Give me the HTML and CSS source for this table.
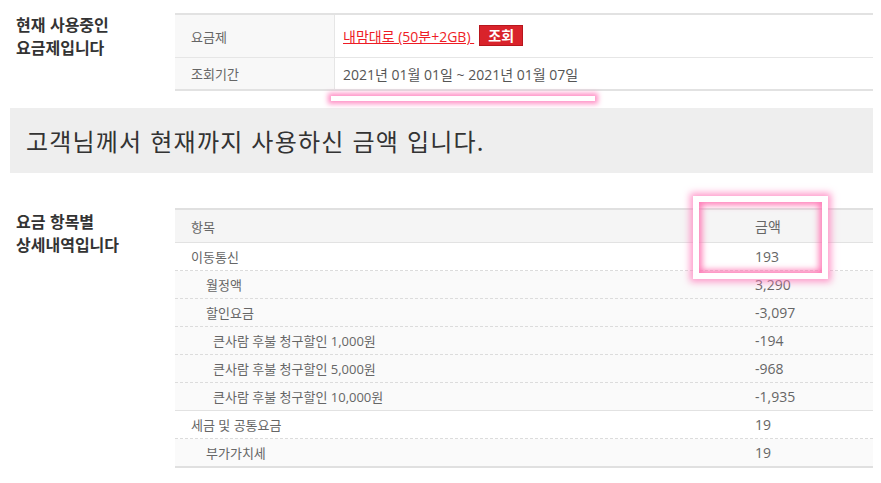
FILE: index.html
```html
<!DOCTYPE html>
<html lang="ko">
<head>
<meta charset="utf-8">
<title>요금 조회</title>
<link rel="stylesheet" href="styles.css">
</head>
<body>
<div class="page">
  <section class="sec sec-plan">
    <h2 class="sec-title">현재 사용중인<br>요금제입니다</h2>
    <div class="info">
      <div class="info-row info-row-first">
        <div class="info-label">요금제</div>
        <div class="info-value"><a class="plan-link" href="#">내맘대로 (50분+2GB) </a><button class="btn-red" type="button">조회</button></div>
      </div>
      <div class="info-row info-row-second">
        <div class="info-label">조회기간</div>
        <div class="info-value">2021년 01월 01일 ~ 2021년 01월 07일</div>
      </div>
    </div>
  </section>

  <div class="banner">고객님께서 현재까지 사용하신 금액 입니다.</div>

  <section class="sec sec-detail">
    <h2 class="sec-title sec-title-detail">요금 항목별<br>상세내역입니다</h2>
    <div class="bill">
      <div class="bill-head">
        <div class="c-name">항목</div>
        <div class="c-amt">금액</div>
      </div>
      <div class="bill-row lv0"><div class="c-name">이동통신</div><div class="c-amt">193</div></div>
      <div class="bill-row lv1 alt"><div class="c-name">월정액</div><div class="c-amt">3,290</div></div>
      <div class="bill-row lv1 alt"><div class="c-name">할인요금</div><div class="c-amt">-3,097</div></div>
      <div class="bill-row lv2 alt"><div class="c-name">큰사람 후불 청구할인 1,000원</div><div class="c-amt">-194</div></div>
      <div class="bill-row lv2 alt"><div class="c-name">큰사람 후불 청구할인 5,000원</div><div class="c-amt">-968</div></div>
      <div class="bill-row lv2 alt group-end"><div class="c-name">큰사람 후불 청구할인 10,000원</div><div class="c-amt">-1,935</div></div>
      <div class="bill-row lv0"><div class="c-name">세금 및 공통요금</div><div class="c-amt">19</div></div>
      <div class="bill-row lv1 alt last"><div class="c-name">부가가치세</div><div class="c-amt">19</div></div>
    </div>
  </section>
</div>
<div class="mark mark-bar"></div>
<div class="mark mark-box"></div>
</body>
</html>
```
FILE: styles.css
```css
* { box-sizing: border-box; }
html, body { margin: 0; padding: 0; background: #fff; }
body {
  position: relative;
  width: 881px;
  height: 483px;
  overflow: hidden;
  font-family: "Open Sans", "Noto Sans CJK KR", sans-serif;
  font-size: 13px;
  color: #666;
}
.page { margin: 0 8px 0 10px; width: 863px; }

.sec { display: flex; align-items: flex-start; padding-left: 6px; }
.sec-plan { padding-top: 13px; }
.sec-detail { padding-top: 35px; }

.sec-title {
  width: 159px;
  flex: none;
  margin: 0;
  font-family: "Noto Sans CJK KR", sans-serif;
  font-size: 16px;
  font-weight: 700;
  line-height: 23px;
  color: #333;
}
.sec-title-detail { margin-top: 2px; }

/* top info table */
.info {
  width: 698px;
  border-top: 2px solid #e2e2e2;
  border-bottom: 2px solid #e2e2e2;
}
.info-row { display: flex; align-items: stretch; }
.info-row-first { height: 43px; border-bottom: 1px solid #e6e6e6; }
.info-row-second { height: 31px; }
.info-label {
  width: 160px;
  flex: none;
  background: #f8f8f8;
  border-right: 1px solid #e6e6e6;
  padding-left: 16px;
  display: flex;
  align-items: center;
  color: #666;
}
.info-value {
  flex: 1;
  padding-left: 8px;
  display: flex;
  align-items: center;
  color: #555;
  font-size: 14px;
}
.plan-link {
  color: #ee1c25;
  text-decoration: underline;
  white-space: pre;
  margin-right: 5px;
}
.btn-red {
  height: 21px;
  width: 44px;
  padding: 0;
  border: 1px solid #b8161d;
  background: #d9232b;
  color: #fff;
  font-family: "Noto Sans CJK KR", sans-serif;
  font-size: 14px;
  font-weight: 700;
  line-height: 19px;
  margin-top: -1px;
}

/* banner */
.banner {
  margin-top: 17px;
  height: 65px;
  background: #eeeeee;
  padding-left: 16px;
  display: flex;
  align-items: center;
  font-family: "Noto Sans CJK KR", sans-serif;
  font-size: 24px;
  color: #333;
  letter-spacing: 1.2px;
}

/* bill table */
.bill {
  width: 698px;
  border-top: 2px solid #e0e0e0;
  border-bottom: 2px solid #e0e0e0;
}
.bill-head, .bill-row { display: flex; align-items: center; }
.bill-head {
  height: 33px;
  background: #f5f5f5;
  border-bottom: 1px solid #e2e2e2;
}
.bill-row {
  height: 28px;
  border-bottom: 1px dashed #dcdcdc;
  background: #fff;
}
.bill-row.alt { background: #fafafa; }
.bill-row.group-end { border-bottom: 1px solid #e2e2e2; }
.bill-row.last { border-bottom: 0; height: 27px; }
.c-name { flex: 1; padding-left: 16px; }
.lv1 .c-name { padding-left: 31px; }
.lv2 .c-name { padding-left: 38px; }
.c-amt { width: 118px; flex: none; font-size: 14px; }

/* annotation marks */
.mark { position: absolute; pointer-events: none; }
.mark-bar {
  left: 331px;
  top: 96px;
  width: 264px;
  height: 5px;
  background: #fff;
  box-shadow: 0 0 5px 3px rgba(255, 120, 185, 0.8);
}
.mark-box {
  left: 693px;
  top: 196px;
  width: 135px;
  height: 83px;
  border: 6px solid #fff;
  box-shadow: 0 0 7px 3px rgba(255, 120, 185, 0.75), inset 0 0 6px 3px rgba(255, 110, 175, 0.9);
}
```
